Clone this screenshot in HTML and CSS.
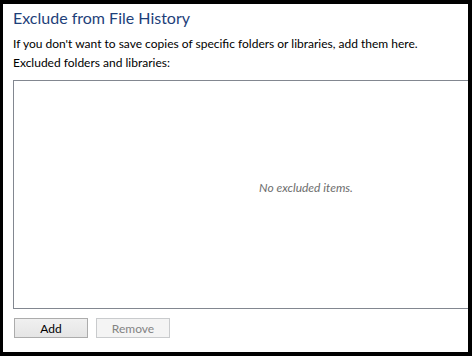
FILE: index.html
```html
<!DOCTYPE html>
<html lang="en">
<head>
  <meta charset="UTF-8" />
  <meta name="viewport" content="width=device-width, initial-scale=1.0" />
  <title>Exclude from File History</title>
  <link rel="stylesheet" href="styles.css">
</head>
<body>

  <!-- Exclude panel -->
  <div class="frame">
    <h1 class="title">Exclude from File History</h1>
    <p class="desc">If you don't want to save copies of specific folders or libraries, add them here.</p>
    <p class="label">Excluded folders and libraries:</p>

    <div class="list">
      <span class="empty">No excluded items.</span>
    </div>

    <div class="actions">
      <button class="btn">Add</button>
      <button class="btn" disabled>Remove</button>
    </div>
  </div>

</body>
</html>
```

FILE: styles.css
```css
* {
  box-sizing: border-box;
  margin: 0;
  padding: 0;
  font-family: Lato, 'Noto Sans', sans-serif;
}

body {
  background-color: #fff;
  width: 476px;
  height: 361px;
}

.frame {
  width: 472px;
  height: 356px;
  border: 4px solid #000;
  border-left-width: 3px;
  padding: 0 0 0 10px;
  overflow: hidden;
  background-color: #fff;
}

.title {
  font-size: 16px;
  font-weight: normal;
  line-height: 20px;
  margin-top: 4px;
  color: #1e3f7a;
}

.desc,
.label {
  font-size: 12px;
  line-height: 16px;
  color: #000;
  white-space: nowrap;
}

.desc {
  margin-top: 8px;
}

.label {
  margin-top: 3px;
}

.list {
  margin-top: 9px;
  width: 586px;
  height: 229px;
  border: 1px solid #828790;
  display: flex;
  justify-content: center;
  padding-top: 99px;
}

.empty {
  font-size: 12px;
  line-height: 16px;
  font-style: italic;
  color: #6d6d6d;
}

.actions {
  display: flex;
  gap: 8px;
  margin-top: 9px;
  padding-left: 1px;
}

.btn {
  width: 74px;
  height: 20px;
  font-size: 12px;
  color: #000;
  border: 1px solid #acacac;
  background: linear-gradient(#f0f0f0, #e5e5e5);
}

.btn:disabled {
  color: #838383;
  border-color: #c9cbcd;
  background: #f4f4f4;
}
```
